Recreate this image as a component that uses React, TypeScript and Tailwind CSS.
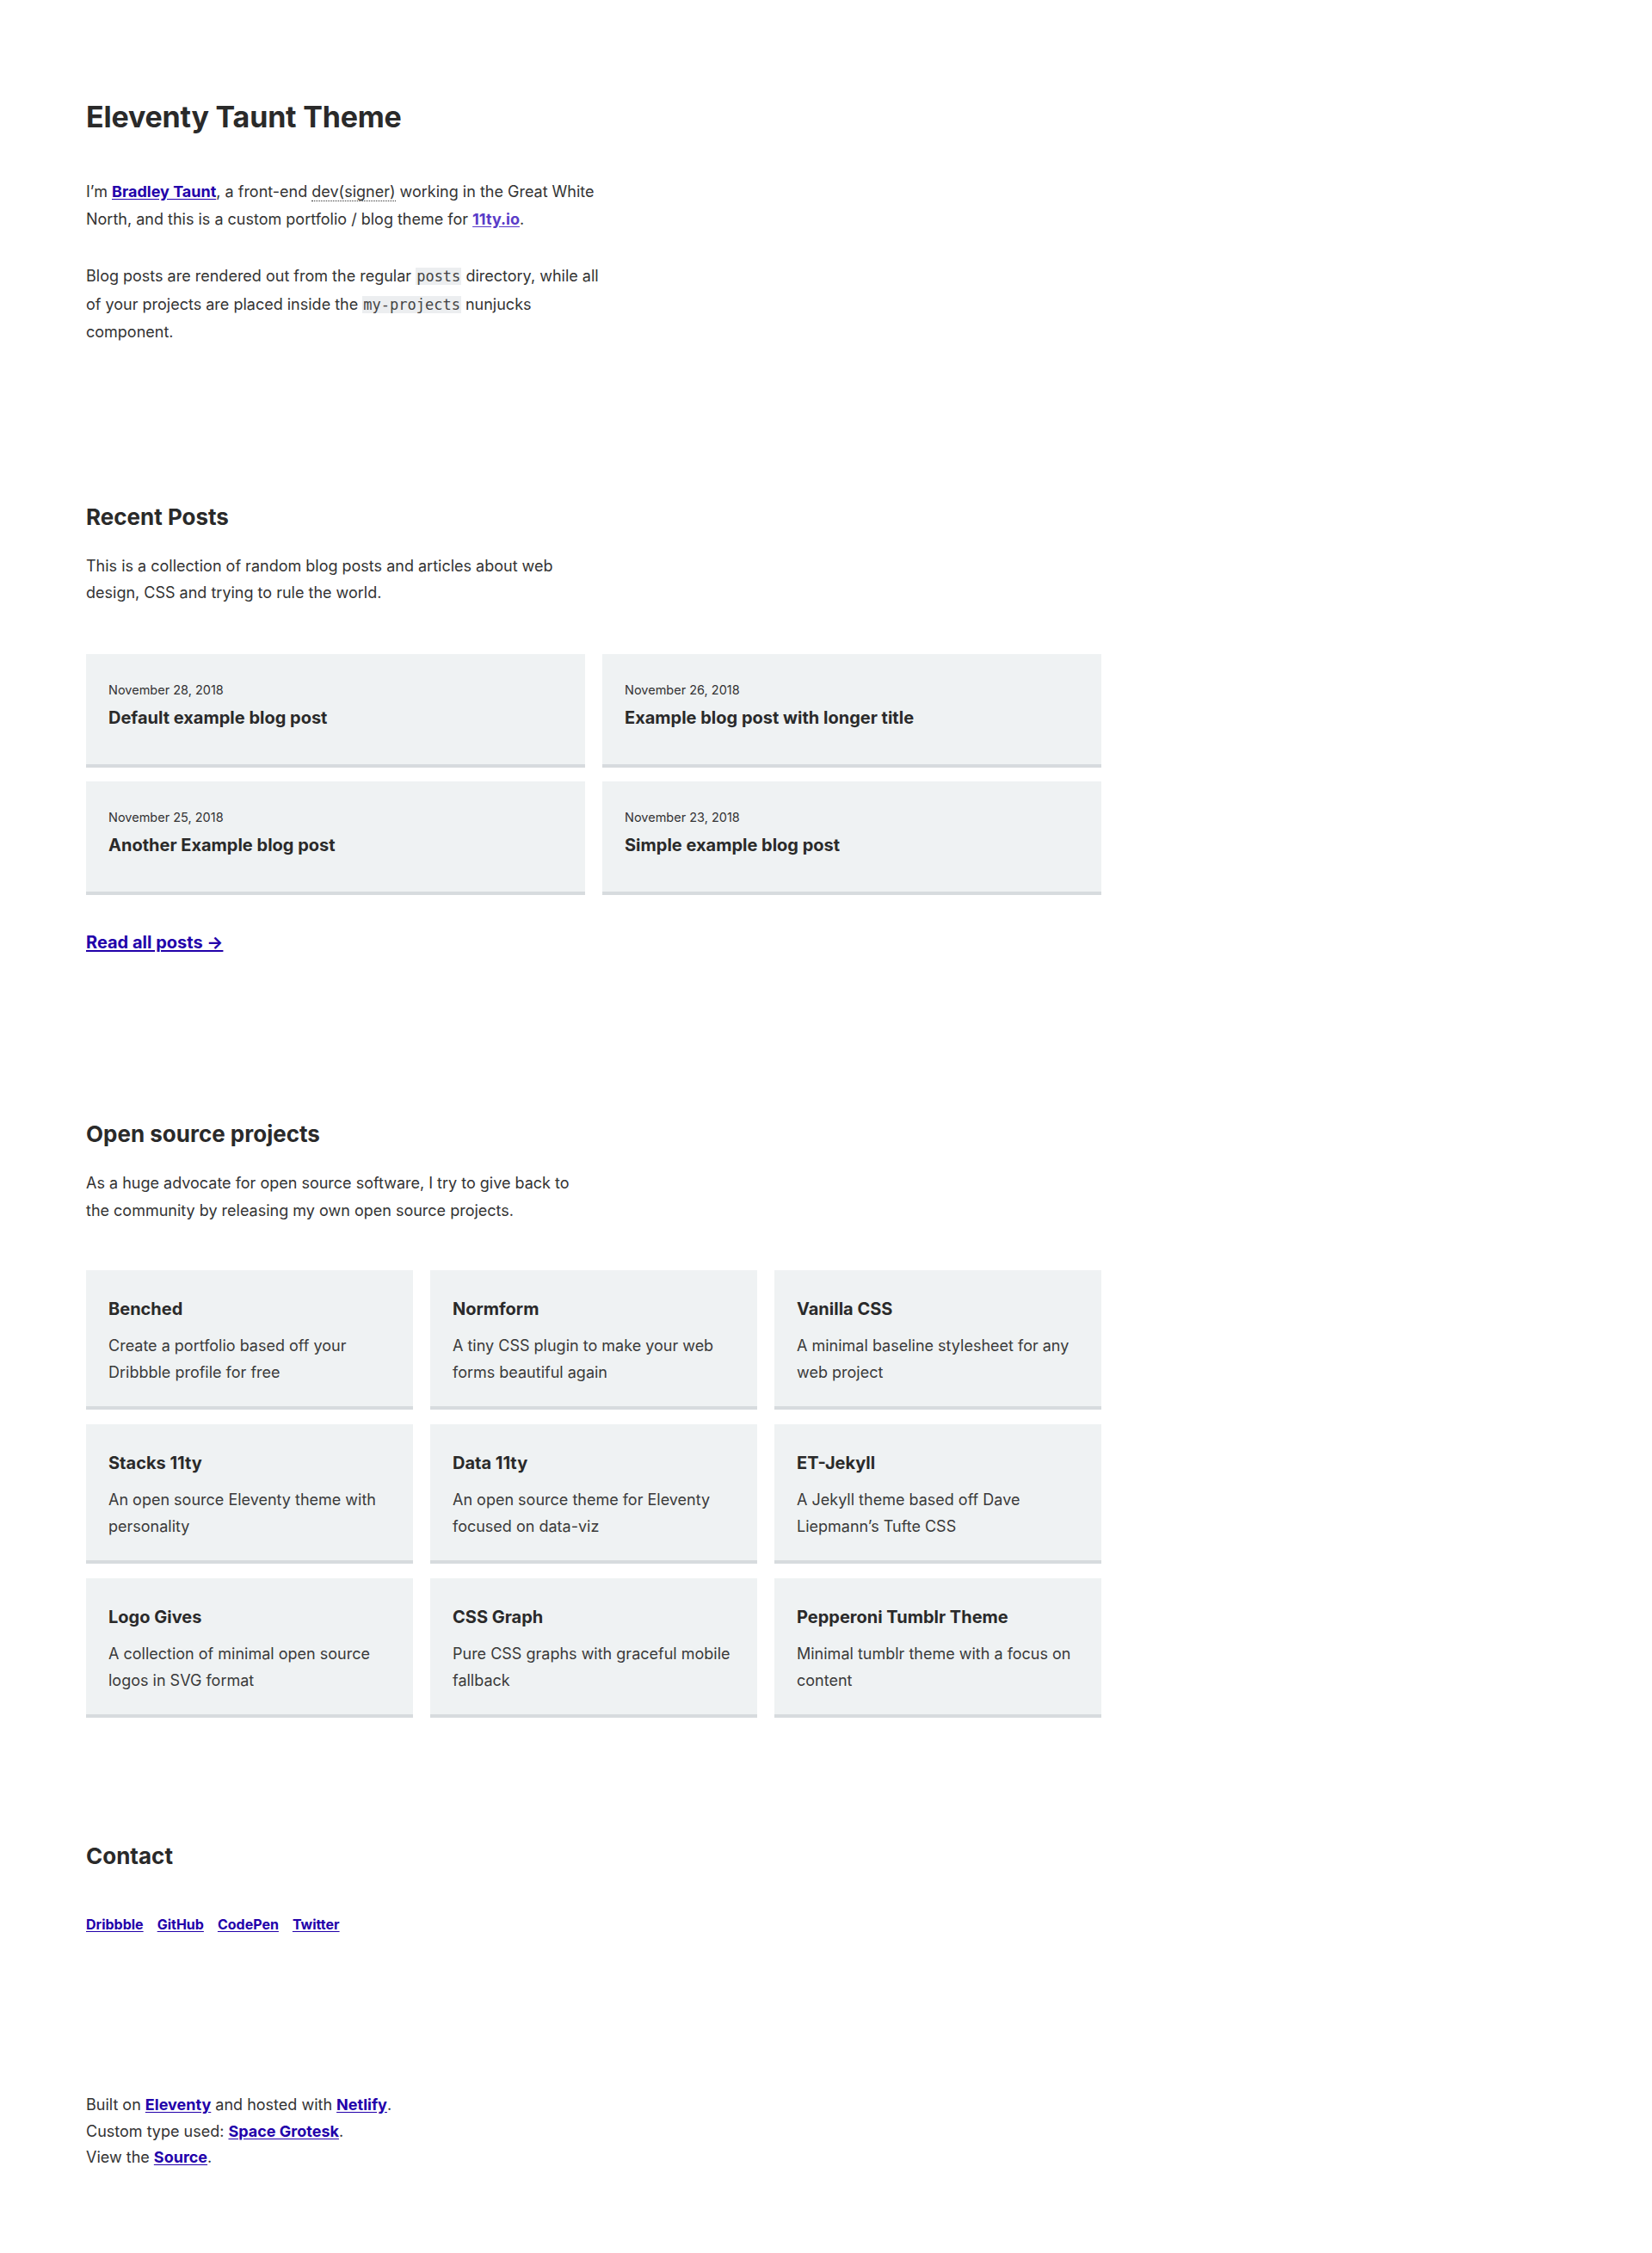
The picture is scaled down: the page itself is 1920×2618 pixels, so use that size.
const posts = [
  { date: "November 28, 2018", title: "Default example blog post" },
  { date: "November 26, 2018", title: "Example blog post with longer title" },
  { date: "November 25, 2018", title: "Another Example blog post" },
  { date: "November 23, 2018", title: "Simple example blog post" },
];

const projects = [
  { name: "Benched", desc: "Create a portfolio based off your Dribbble profile for free" },
  { name: "Normform", desc: "A tiny CSS plugin to make your web forms beautiful again" },
  { name: "Vanilla CSS", desc: "A minimal baseline stylesheet for any web project" },
  { name: "Stacks 11ty", desc: "An open source Eleventy theme with personality" },
  { name: "Data 11ty", desc: "An open source theme for Eleventy focused on data-viz" },
  { name: "ET-Jekyll", desc: "A Jekyll theme based off Dave Liepmann’s Tufte CSS" },
  { name: "Logo Gives", desc: "A collection of minimal open source logos in SVG format" },
  { name: "CSS Graph", desc: "Pure CSS graphs with graceful mobile fallback" },
  { name: "Pepperoni Tumblr Theme", desc: "Minimal tumblr theme with a focus on content" },
];

const link = "font-bold text-[#2200aa] underline underline-offset-2";

const Code = ({ children }: { children: string }) => (
  <code className="bg-[#eceef0] px-[1px] font-['DejaVu_Sans_Mono',monospace] text-[17px] text-[#444]">
    {children}
  </code>
);

const PostCard = ({ date, title }: { date: string; title: string }) => (
  <a className="block border-b-4 border-[#d7dbde] bg-[#eff2f3] px-[26px] pt-[30px] pb-[39px]">
    <p className="text-[14.5px] leading-6 text-[#333]">{date}</p>
    <h3 className="mt-[5px] text-[20px] font-bold leading-[30px] text-[#2a2a2a]">{title}</h3>
  </a>
);

const ProjectCard = ({ name, desc }: { name: string; desc: string }) => (
  <a className="block border-b-4 border-[#d7dbde] bg-[#eff2f3] px-[26px] pt-[30px] pb-[24px]">
    <h3 className="text-[20px] font-bold leading-[30px] text-[#2a2a2a]">{name}</h3>
    <p className="mt-[12px] text-[18px] leading-[31px] text-[#3a3a3a]">{desc}</p>
  </a>
);

export default function App() {
  return (
    <div className="min-h-screen bg-white px-[100px] pt-[114px] pb-[96px] font-['Inter',sans-serif] text-[18px] leading-[31.5px] text-[#333]">
      <header>
        <h1 className="text-[34px] font-bold leading-[43px] tracking-[-0.2px] text-[#2a2a2a]">Eleventy Taunt Theme</h1>
        <p className="mt-[50px] max-w-[600px]">
          I’m <a className={link}>Bradley Taunt</a>, a front-end{" "}
          <abbr className="border-b border-dotted border-[#333] no-underline">dev(signer)</abbr> working in the Great
          White North, and this is a custom portfolio / blog theme for{" "}
          <a className="font-bold text-[#5a3cc8] underline underline-offset-2">11ty.io</a>.
        </p>
        <p className="mt-[35px] max-w-[600px]">
          Blog posts are rendered out from the regular <Code>posts</Code> directory, while all of your projects are
          placed inside the <Code>my-projects</Code> nunjucks component.
        </p>
      </header>

      <section className="mt-[182px]">
        <h2 className="text-[26px] font-bold leading-[34px] text-[#2a2a2a]">Recent Posts</h2>
        <p className="mt-[24px] max-w-[600px]">
          This is a collection of random blog posts and articles about web design, CSS and trying to rule the world.
        </p>
        <div className="mt-[55px] grid w-[1180px] grid-cols-2 gap-x-5 gap-y-4">
          {posts.map((p) => (
            <PostCard key={p.title} {...p} />
          ))}
        </div>
        <a className={`${link} mt-[40px] inline-block text-[20px] leading-[30px]`}>Read all posts →</a>
      </section>

      <section className="mt-[190px]">
        <h2 className="text-[26px] font-bold leading-[34px] text-[#2a2a2a]">Open source projects</h2>
        <p className="mt-[24px] max-w-[585px]">
          As a huge advocate for open source software, I try to give back to the community by releasing my own open
          source projects.
        </p>
        <div className="mt-[54px] grid w-[1180px] grid-cols-3 gap-x-5 gap-y-[17px]">
          {projects.map((p) => (
            <ProjectCard key={p.name} {...p} />
          ))}
        </div>
      </section>

      <section className="mt-[144px]">
        <h2 className="text-[26px] font-bold leading-[34px] text-[#2a2a2a]">Contact</h2>
        <nav className="mt-[50px] flex gap-4 text-[16px] leading-6">
          <a className={link}>Dribbble</a>
          <a className={link}>GitHub</a>
          <a className={link}>CodePen</a>
          <a className={link}>Twitter</a>
        </nav>
      </section>

      <footer className="mt-[183px] leading-[30.5px]">
        <p>
          Built on <a className={link}>Eleventy</a> and hosted with <a className={link}>Netlify</a>.
        </p>
        <p>
          Custom type used: <a className={link}>Space Grotesk</a>.
        </p>
        <p>
          View the <a className={link}>Source</a>.
        </p>
      </footer>
    </div>
  );
}
